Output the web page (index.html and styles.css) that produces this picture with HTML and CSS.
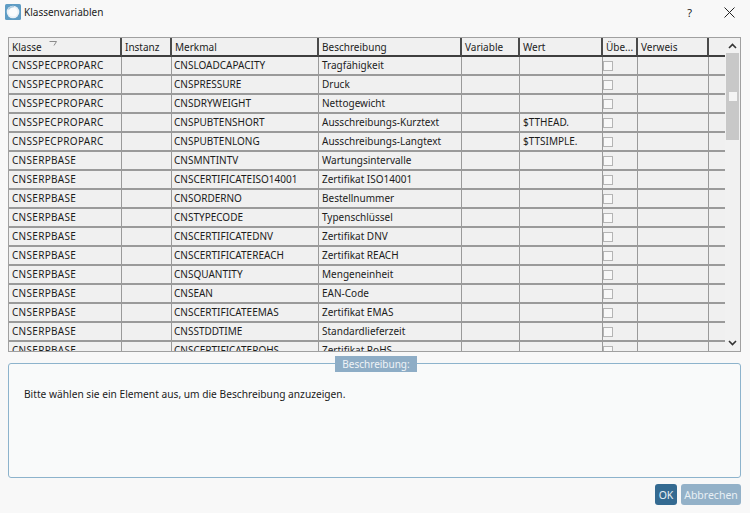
FILE: index.html
```html
<!DOCTYPE html>
<html lang="de">
<head>
<meta charset="utf-8">
<title>Klassenvariablen</title>
<link rel="stylesheet" href="styles.css">
</head>
<body>
<div class="dialog">
  <header class="titlebar">
    <svg class="appicon" width="16" height="16" viewBox="0 0 16 16"><rect x="0" y="0" width="16" height="16" rx="1.5" fill="#5e9cc4"/><circle cx="8" cy="8" r="6.3" fill="#e8f0f6"/><circle cx="8" cy="8" r="4.6" fill="#fafcfd"/><path d="M3.5 5.5A5.5 5.5 0 0 1 9 2.6" stroke="#a9c8dd" stroke-width="1.2" fill="none"/></svg>
    <span class="title">Klassenvariablen</span>
    <span class="help">?</span>
    <svg class="close" width="11" height="11" viewBox="0 0 11 11"><path d="M.5.5l10 10M10.5.5l-10 10" stroke="#222" stroke-width="1" fill="none"/></svg>
  </header>
  <section class="grid">
    <div class="tablewrap">
      <table>
        <colgroup><col class="c1"><col class="c2"><col class="c3"><col class="c4"><col class="c5"><col class="c6"><col class="c7"><col class="c8"><col class="c9"></colgroup>
        <thead><tr>
          <th>Klasse<svg class="sort" width="8" height="5" viewBox="0 0 8 5"><path d="M.5.5h7L5 4.5" stroke="#8a8a8a" fill="none"/></svg></th><th>Instanz</th><th>Merkmal</th><th>Beschreibung</th><th>Variable</th><th>Wert</th><th>Übe...</th><th>Verweis</th><th></th>
        </tr></thead>
        <tbody>
          <tr><td>CNSSPECPROPARC</td><td></td><td>CNSLOADCAPACITY</td><td>Tragfähigkeit</td><td></td><td></td><td><i class="cb"></i></td><td></td><td></td></tr>
          <tr><td>CNSSPECPROPARC</td><td></td><td>CNSPRESSURE</td><td>Druck</td><td></td><td></td><td><i class="cb"></i></td><td></td><td></td></tr>
          <tr><td>CNSSPECPROPARC</td><td></td><td>CNSDRYWEIGHT</td><td>Nettogewicht</td><td></td><td></td><td><i class="cb"></i></td><td></td><td></td></tr>
          <tr><td>CNSSPECPROPARC</td><td></td><td>CNSPUBTENSHORT</td><td>Ausschreibungs-Kurztext</td><td></td><td>$TTHEAD.</td><td><i class="cb"></i></td><td></td><td></td></tr>
          <tr><td>CNSSPECPROPARC</td><td></td><td>CNSPUBTENLONG</td><td>Ausschreibungs-Langtext</td><td></td><td>$TTSIMPLE.</td><td><i class="cb"></i></td><td></td><td></td></tr>
          <tr><td>CNSERPBASE</td><td></td><td>CNSMNTINTV</td><td>Wartungsintervalle</td><td></td><td></td><td><i class="cb"></i></td><td></td><td></td></tr>
          <tr><td>CNSERPBASE</td><td></td><td>CNSCERTIFICATEISO14001</td><td>Zertifikat ISO14001</td><td></td><td></td><td><i class="cb"></i></td><td></td><td></td></tr>
          <tr><td>CNSERPBASE</td><td></td><td>CNSORDERNO</td><td>Bestellnummer</td><td></td><td></td><td><i class="cb"></i></td><td></td><td></td></tr>
          <tr><td>CNSERPBASE</td><td></td><td>CNSTYPECODE</td><td>Typenschlüssel</td><td></td><td></td><td><i class="cb"></i></td><td></td><td></td></tr>
          <tr><td>CNSERPBASE</td><td></td><td>CNSCERTIFICATEDNV</td><td>Zertifikat DNV</td><td></td><td></td><td><i class="cb"></i></td><td></td><td></td></tr>
          <tr><td>CNSERPBASE</td><td></td><td>CNSCERTIFICATEREACH</td><td>Zertifikat REACH</td><td></td><td></td><td><i class="cb"></i></td><td></td><td></td></tr>
          <tr><td>CNSERPBASE</td><td></td><td>CNSQUANTITY</td><td>Mengeneinheit</td><td></td><td></td><td><i class="cb"></i></td><td></td><td></td></tr>
          <tr><td>CNSERPBASE</td><td></td><td>CNSEAN</td><td>EAN-Code</td><td></td><td></td><td><i class="cb"></i></td><td></td><td></td></tr>
          <tr><td>CNSERPBASE</td><td></td><td>CNSCERTIFICATEEMAS</td><td>Zertifikat EMAS</td><td></td><td></td><td><i class="cb"></i></td><td></td><td></td></tr>
          <tr><td>CNSERPBASE</td><td></td><td>CNSSTDDTIME</td><td>Standardlieferzeit</td><td></td><td></td><td><i class="cb"></i></td><td></td><td></td></tr>
          <tr><td>CNSERPBASE</td><td></td><td>CNSCERTIFICATEROHS</td><td>Zertifikat RoHS</td><td></td><td></td><td><i class="cb"></i></td><td></td><td></td></tr>
        </tbody>
      </table>
    </div>
    <div class="scrollbar">
      <svg width="9" height="6" viewBox="0 0 9 6"><path d="M1 5l3.5-3.5L8 5" stroke="#333" stroke-width="1.6" fill="none"/></svg>
      <div class="track"><div class="thumb"><div class="grip"></div></div></div>
      <svg width="9" height="6" viewBox="0 0 9 6"><path d="M1 1l3.5 3.5L8 1" stroke="#333" stroke-width="1.6" fill="none"/></svg>
    </div>
  </section>
  <section class="desc">
    <span class="legend">Beschreibung:</span>
    <p>Bitte wählen sie ein Element aus, um die Beschreibung anzuzeigen.</p>
  </section>
  <footer class="buttons">
    <button class="btn primary">OK</button>
    <button class="btn muted">Abbrechen</button>
  </footer>
</div>
</body>
</html>
```
FILE: styles.css
```css
* { box-sizing: border-box; }
html, body { margin: 0; padding: 0; }
body { width: 750px; height: 513px; background: #f8f8f8; font-family: "Noto Sans", "Open Sans", sans-serif; font-size: 10px; color: #1c1c1c; overflow: hidden; }
.dialog { display: flex; flex-direction: column; height: 513px; padding: 0 9px 0 8px; }
.titlebar { display: flex; align-items: center; height: 37px; padding-bottom: 13px; flex: none; margin-left: -3px; margin-right: -9px; }
.appicon { margin-right: 3px; flex: none; }
.title { flex: 1; font-size: 10px; }
.help { font-size: 11px; margin-right: 32px; }
.close { margin-right: 15px; }
.grid { display: flex; height: 315px; flex: none; border: 1px solid #a0a0a0; background: #f0f0f0; }
.tablewrap { width: 716px; overflow: hidden; height: 313px; }
table { border-collapse: separate; border-spacing: 0; table-layout: fixed; width: 716px; }
.c1 { width: 113px; } .c2 { width: 50px; } .c3 { width: 147px; } .c4 { width: 143px; } .c5 { width: 58px; } .c6 { width: 83px; } .c7 { width: 35px; } .c8 { width: 71px; } .c9 { width: 16px; }
th { height: 19px; padding: 0 0 0 3px; text-align: left; font-weight: 400; font-size: 10px; background: #f0f0f0; border-right: 2px solid #4a4a4a; border-bottom: 2px solid #3e3e3e; white-space: nowrap; overflow: hidden; }
th:last-child { border-right: 0; }
.sort { margin-left: 7px; vertical-align: 5px; }
td { height: 19px; padding: 1px 0 1px 3px; white-space: nowrap; overflow: hidden; border-right: 1px solid #9a9a9a; border-bottom: 2px solid #9a9a9a; line-height: 15px; }
td:first-child { letter-spacing: 0.3px; }
td:nth-child(3) { padding-left: 2px; }
td:last-child { border-right: 0; }
.cb { display: block; width: 10px; height: 10px; border: 1px solid #b4b4b4; background: #f8f8f8; margin: 1px 0 0 -3px; }
.scrollbar { flex: 1; display: flex; flex-direction: column; align-items: center; justify-content: space-between; padding: 5px 0; background: #f1f1f1; }
.track { width: 13px; flex: 1; margin: 4px 0 2px; }
.thumb { display: flex; justify-content: center; align-items: center; height: 87px; background: #c8c8c8; }
.grip { width: 8px; height: 9px; background: #f4f4f4; }
.desc { position: relative; flex: none; height: 115px; margin-top: 11px; border: 1px solid #8db3cc; border-radius: 3px; background: #f9fafa; padding: 23px 15px 0; }
.desc p { margin: 0; font-size: 10.2px; line-height: 15px; }
.legend { position: absolute; top: -8px; left: 326px; width: 82px; height: 16px; line-height: 16px; text-align: center; background: #8eadc6; color: #eef3f7; font-size: 10px; }
.buttons { display: flex; justify-content: flex-end; gap: 4px; margin-top: 6px; }
.btn { height: 21px; padding: 0; border: 0; border-radius: 3px; font: inherit; font-size: 10.5px; color: #e8f0f5; }
.primary { width: 22px; background: #346a91; }
.muted { width: 60px; background: #93b1c8; }
```
